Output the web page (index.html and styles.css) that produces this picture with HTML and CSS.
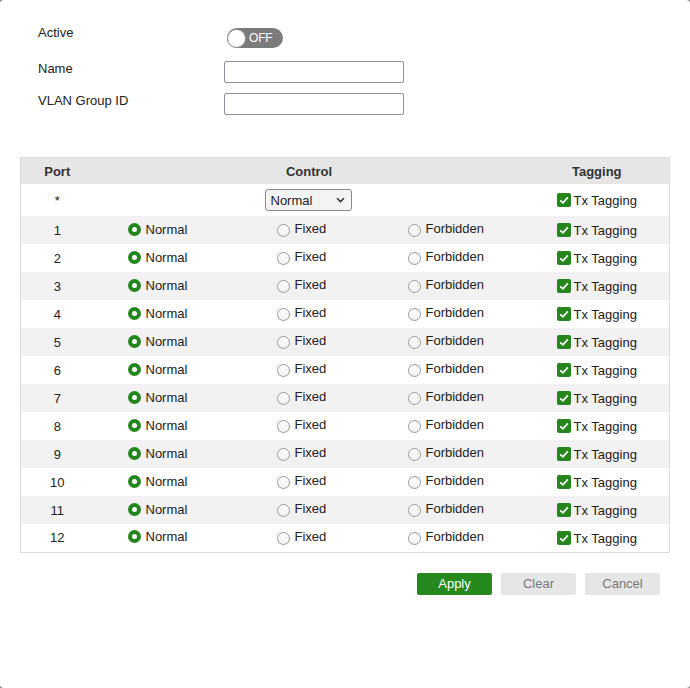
FILE: index.html
```html
<!DOCTYPE html>
<html>
<head>
<meta charset="utf-8">
<link rel="stylesheet" href="styles.css">
</head>
<body>
<div class="dialog">
  <div class="form">
    <div class="frow frow-active">
      <div class="flabel">Active</div>
      <div class="toggle"><span class="knob"></span><span class="toggle-text">OFF</span></div>
    </div>
    <div class="frow frow-name">
      <div class="flabel">Name</div>
      <input class="tinput" type="text">
    </div>
    <div class="frow frow-vlan">
      <div class="flabel">VLAN Group ID</div>
      <input class="tinput" type="text">
    </div>
  </div>

  <table class="ports">
    <colgroup>
      <col class="c-port"><col class="c-normal"><col class="c-fixed"><col class="c-forb"><col class="c-tag">
    </colgroup>
    <thead>
      <tr><th>Port</th><th colspan="3">Control</th><th>Tagging</th></tr>
    </thead>
    <tbody id="rows">
      <tr class="star">
        <td class="port">*</td>
        <td colspan="3" class="selcell"><div class="select"><span>Normal</span><svg class="chev" width="9" height="6" viewBox="0 0 9 6"><path d="M1 1.2 L4.5 4.6 L8 1.2" fill="none" stroke="#333" stroke-width="1.5"/></svg></div></td>
        <td class="tag"><span class="opt"><span class="cb"><svg width="14" height="14" viewBox="0 0 14 14"><path d="M3.2 7.3 L5.9 9.8 L10.8 4.4" fill="none" stroke="#fff" stroke-width="1.8"/></svg></span>Tx Tagging</span></td>
      </tr>
    </tbody>
  </table>

  <div class="actions">
    <button class="btn btn-apply">Apply</button>
    <button class="btn btn-off">Clear</button>
    <button class="btn btn-off">Cancel</button>
  </div>
</div>
<script>
(function(){
  var tb = document.getElementById('rows');
  var html = '';
  for (var i = 1; i <= 12; i++) {
    html += '<tr class="' + (i % 2 ? 'alt' : '') + '">' +
      '<td class="port">' + i + '</td>' +
      '<td class="ctl"><span class="opt"><span class="radio on"></span>Normal</span></td>' +
      '<td class="ctl"><span class="opt"><span class="radio"></span>Fixed</span></td>' +
      '<td class="ctl"><span class="opt"><span class="radio"></span>Forbidden</span></td>' +
      '<td class="tag"><span class="opt"><span class="cb"><svg width="14" height="14" viewBox="0 0 14 14"><path d="M3.2 7.3 L5.9 9.8 L10.8 4.4" fill="none" stroke="#fff" stroke-width="1.8"/></svg></span>Tx Tagging</span></td>' +
      '</tr>';
  }
  tb.insertAdjacentHTML('beforeend', html);
})();
</script>
</body>
</html>
```

FILE: styles.css
```css
html {
  background: #8a8a8a;
}
body {
  margin: 0;
  font-family: "Liberation Sans", Arial, sans-serif;
  font-size: 13px;
  color: #222;
}
.dialog {
  background: #fff;
  height: 688px;
  border-radius: 4px;
  box-sizing: border-box;
  padding: 28px 20px 0 20px;
}
.form {
  padding-left: 18px;
}
.frow {
  display: flex;
  align-items: flex-start;
}
.flabel {
  width: 186px;
  line-height: 14px;
}
.frow-active .flabel {
  width: 189px;
  margin-top: -2px;
}
.frow-name {
  margin-top: 13px;
}
.frow-name .flabel {
  margin-top: 1px;
}
.frow-vlan {
  margin-top: 10px;
}
.frow-vlan .flabel {
  margin-top: 1px;
}
.toggle {
  width: 56px;
  height: 20px;
  border-radius: 10px;
  background: #7b7b7b;
  display: flex;
  align-items: center;
  box-sizing: border-box;
}
.knob {
  width: 19px;
  height: 19px;
  border-radius: 50%;
  background: radial-gradient(circle at 50% 40%, #fff 55%, #e8e8e8 100%);
  border: 1px solid #9a9a9a;
  box-sizing: border-box;
}
.toggle-text {
  color: #fff;
  font-size: 12px;
  margin-left: 3px;
  letter-spacing: -0.2px;
}
.tinput {
  width: 180px;
  height: 22px;
  box-sizing: border-box;
  border: 1px solid #8f8f9d;
  border-radius: 2px;
  margin: 0;
  padding: 0 4px;
  font: inherit;
  background: #fff;
}

.ports {
  margin-top: 42px;
  width: 649px;
  table-layout: fixed;
  border-collapse: collapse;
  border: 1px solid #dcdcdc;
}
.c-port { width: 73px; }
.c-normal { width: 149px; }
.c-fixed { width: 131px; }
.c-forb { width: 151px; }
.c-tag { width: 145px; }
.ports th {
  background: #e6e6e6;
  height: 26px;
  padding: 0;
  font-weight: bold;
  color: #333;
  text-align: center;
  vertical-align: middle;
}
.ports td {
  box-sizing: border-box;
  padding: 0;
  height: 28px;
  vertical-align: middle;
  color: #222;
}
.ports tr.star td {
  height: 32px;
}
.ports tr.alt td {
  background: #f2f2f2;
}
.ports td.port {
  text-align: center;
}
.ports td.ctl {
  padding-left: 34px;
}
.ports td.tag {
  padding-left: 32px;
  padding-top: 3px;
}
.ports td.selcell {
  text-align: center;
  padding-left: 0;
}
.opt {
  display: inline-flex;
  align-items: center;
}
.radio {
  width: 13px;
  height: 13px;
  box-sizing: border-box;
  border-radius: 50%;
  border: 1px solid #9a9a9a;
  background: linear-gradient(#fff, #f0f0f0);
  margin-right: 5px;
  margin-top: 4px;
}
.radio.on {
  border: 4px solid #24861d;
  background: #fff;
  margin-top: 0;
}
.cb {
  width: 14px;
  height: 14px;
  border-radius: 2px;
  background: #24861d;
  margin-right: 3px;
  display: inline-flex;
}
.select {
  display: inline-flex;
  align-items: center;
  justify-content: space-between;
  width: 87px;
  height: 22px;
  box-sizing: border-box;
  border: 1px solid #8a8a8a;
  border-radius: 3px;
  background: #f4f4f4;
  padding: 0 6px 0 5px;
  margin-left: -2px;
  text-align: left;
}
.chev {
  display: block;
}

.actions {
  display: flex;
  justify-content: flex-end;
  gap: 9px;
  margin-top: 20px;
  padding-right: 10px;
}
.btn {
  width: 75px;
  height: 22px;
  border: none;
  border-radius: 2px;
  font-family: "Liberation Sans", Arial, sans-serif;
  font-size: 13px;
  padding: 0;
  margin: 0;
}
.btn-apply {
  background: #26891e;
  color: #fff;
}
.btn-off {
  background: #e6e6e6;
  color: #777;
}
```
